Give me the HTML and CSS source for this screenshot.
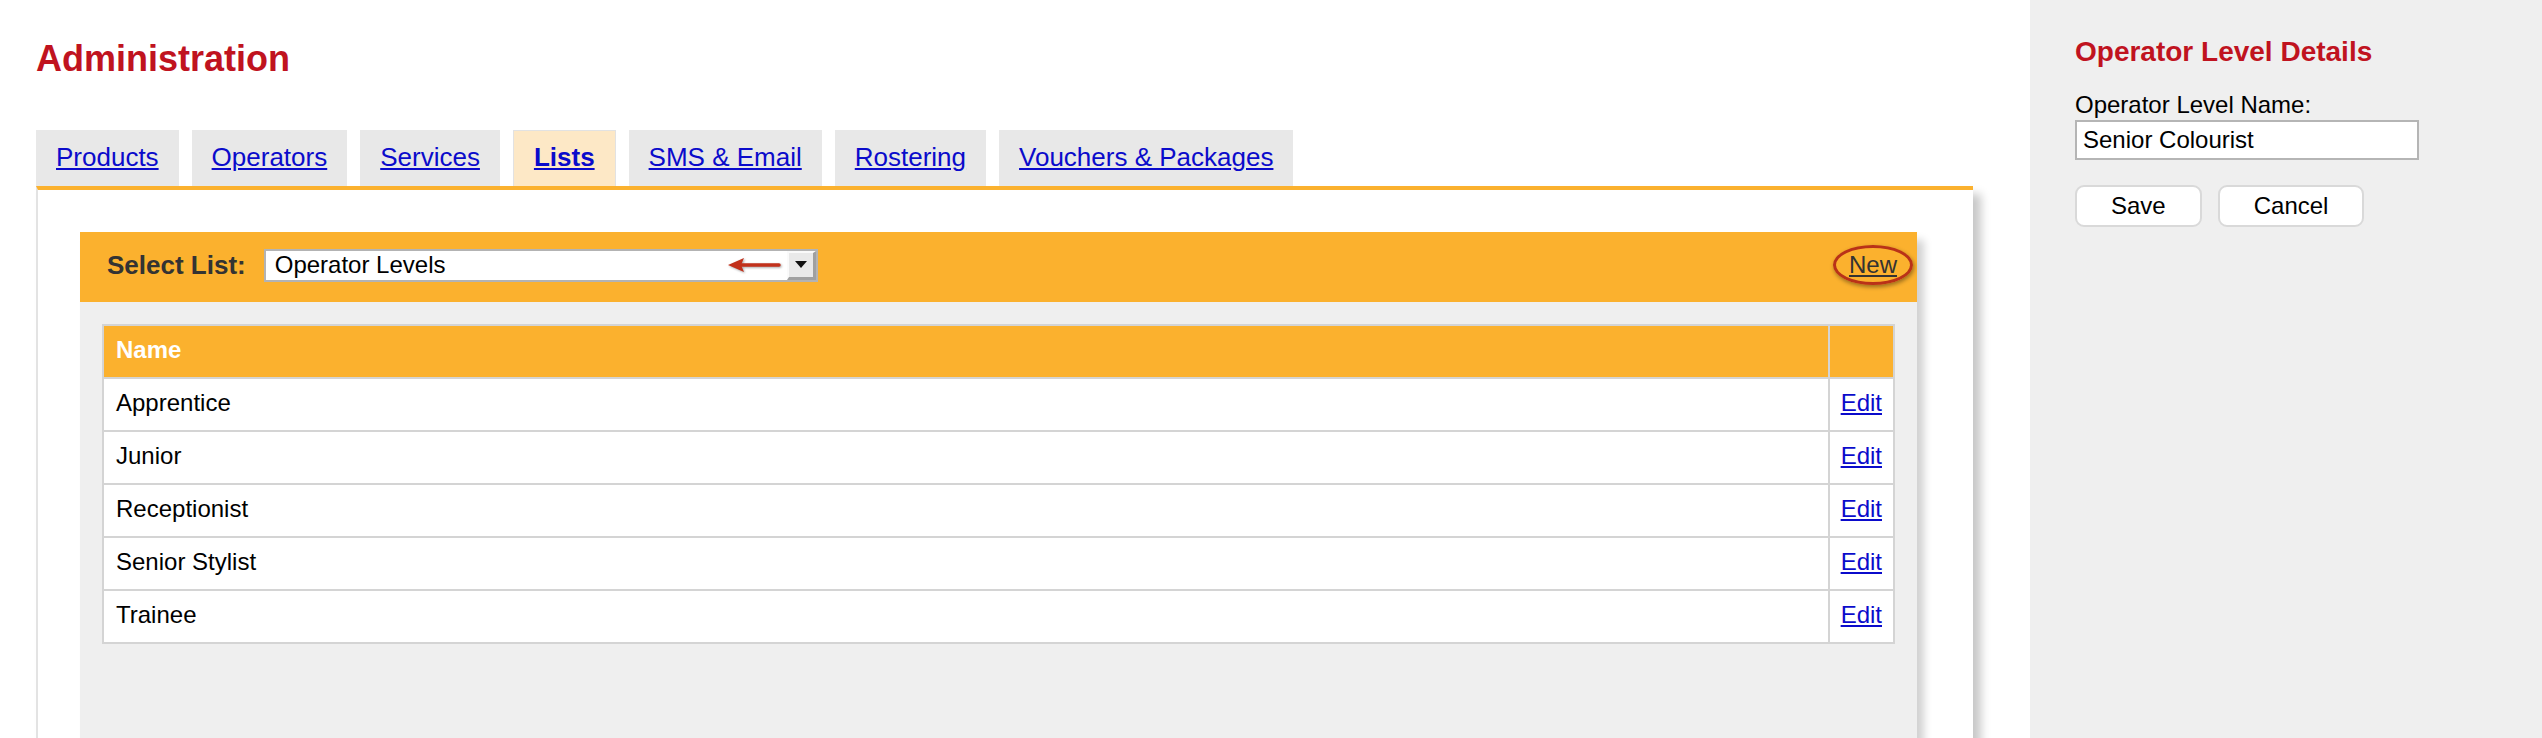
FILE: index.html
```html
<!DOCTYPE html>
<html lang="en">
<head>
  <meta charset="UTF-8">
  <title>Administration - Lists</title>
  <link rel="stylesheet" href="styles.css">
</head>
<body>
  <div class="page">
    <div class="main">
      <h1 class="page-title">Administration</h1>

      <!-- admin section tabs -->
      <ul class="tabs">
        <li class="tab"><a href="#">Products</a></li>
        <li class="tab"><a href="#">Operators</a></li>
        <li class="tab"><a href="#">Services</a></li>
        <li class="tab active"><a href="#">Lists</a></li>
        <li class="tab"><a href="#">SMS &amp; Email</a></li>
        <li class="tab"><a href="#">Rostering</a></li>
        <li class="tab"><a href="#">Vouchers &amp; Packages</a></li>
      </ul>

      <div class="panel">
        <div class="list-box">
          <div class="list-bar">
            <span class="list-label">Select List:</span>
            <div class="select-box">
              <span class="select-value">Operator Levels</span>
              <!-- red arrow pointing at the chosen list -->
              <svg class="note-arrow" width="54" height="16" viewBox="0 0 54 16">
                <line x1="13" y1="8" x2="52" y2="8" stroke="#c2311b" stroke-width="3.5" stroke-linecap="round"/>
                <polygon points="1,8 17,1 14,8 17,15" fill="#c2311b"/>
              </svg>
              <span class="select-button"><span class="select-caret"></span></span>
            </div>
            <span class="new-ring"><a href="#" class="new-link">New</a></span>
          </div>

          <div class="list-body">
            <table class="list-table">
              <thead>
                <tr><th>Name</th><th class="col-edit"></th></tr>
              </thead>
              <tbody>
                <tr><td>Apprentice</td><td class="col-edit"><a href="#">Edit</a></td></tr>
                <tr><td>Junior</td><td class="col-edit"><a href="#">Edit</a></td></tr>
                <tr><td>Receptionist</td><td class="col-edit"><a href="#">Edit</a></td></tr>
                <tr><td>Senior Stylist</td><td class="col-edit"><a href="#">Edit</a></td></tr>
                <tr><td>Trainee</td><td class="col-edit"><a href="#">Edit</a></td></tr>
              </tbody>
            </table>
          </div>
        </div>
      </div>
    </div>

    <!-- edit form for the selected item -->
    <div class="sidebar">
      <h2 class="side-title">Operator Level Details</h2>
      <label class="field-label" for="levelName">Operator Level Name:</label>
      <input type="text" id="levelName" class="field-input" value="Senior Colourist">
      <div class="form-buttons">
        <button class="btn">Save</button>
        <button class="btn">Cancel</button>
      </div>
    </div>
  </div>
</body>
</html>
```

FILE: styles.css
```css
/* page base */
body {
  margin: 0;
  font-family: "Liberation Sans", Arial, Helvetica, sans-serif;
  font-size: 24px;
  color: #000;
  background: #fff;
}
a {
  color: #0b0bcb;
}
.page {
  display: flex;
  min-height: 100vh;
}
.main {
  flex: 1;
  padding: 0 57px 0 36px;
}

/* title */
.page-title {
  margin: 38px 0 51px;
  font-size: 36px;
  line-height: 41px;
  font-weight: bold;
  color: #c0131f;
}

/* tabs */
.tabs {
  display: flex;
  gap: 13px;
  margin: 0;
  padding: 0;
  list-style: none;
}
.tab {
  background: #e8e8e8;
  padding: 12px 20px 14px;
  font-size: 26px;
  line-height: 30px;
}
.tab.active {
  background: #fde8c6;
  border: 1px solid #e2e2e2;
  border-bottom: none;
  padding-top: 11px;
  font-weight: bold;
}

/* white panel under the tabs */
.panel {
  background: #fff;
  border-top: 4px solid #fbb12e;
  border-left: 2px solid #e3e3e3;
  box-shadow: 8px 8px 9px rgba(0, 0, 0, 0.22);
  padding: 42px 56px 0 42px;
}
.list-box {
  background: #efefef;
  box-shadow: 7px 8px 8px rgba(0, 0, 0, 0.18);
  min-height: 640px;
}

/* orange bar with list selector */
.list-bar {
  display: flex;
  align-items: center;
  height: 70px;
  padding: 0 4px 4px 27px;
  box-sizing: border-box;
  background: #fbb12e;
}
.list-label {
  font-size: 26px;
  font-weight: bold;
  color: #333;
  margin-right: 18px;
}
.select-box {
  display: flex;
  align-items: stretch;
  width: 550px;
  height: 29px;
  border: 2px solid #b3b3b3;
  background: #fff;
}
.select-value {
  flex: 1;
  padding-left: 9px;
  line-height: 28px;
}
.note-arrow {
  align-self: center;
  margin-right: 6px;
  filter: drop-shadow(1px 1px 1px rgba(0, 0, 0, 0.35));
}
.select-button {
  display: flex;
  align-items: center;
  justify-content: center;
  box-sizing: border-box;
  width: 29px;
  background: #e9e9e9;
  border-top: 2px solid #fafafa;
  border-left: 2px solid #fafafa;
  border-right: 3px solid #a0a0a0;
  border-bottom: 3px solid #a0a0a0;
}
.select-caret {
  width: 0;
  height: 0;
  border-left: 6px solid transparent;
  border-right: 6px solid transparent;
  border-top: 7px solid #111;
}

/* "New" link, circled in red */
.new-ring {
  margin-left: auto;
  padding: 3px 13px;
  border: 3px solid #b93218;
  border-radius: 50%;
  box-shadow: 1px 2px 4px rgba(0, 0, 0, 0.4);
  line-height: 28px;
}
.new-link {
  color: #333;
}

/* list table */
.list-body {
  padding: 22px;
}
.list-table {
  width: 100%;
  border-collapse: separate;
  border-spacing: 2px;
  background: #d4d4d4;
}
.list-table th,
.list-table td {
  padding: 10px 12px 14px;
  line-height: 27px;
  text-align: left;
  background: #fff;
}
.list-table th {
  background: #fbb12e;
  color: #fff;
  font-weight: bold;
}
.list-table .col-edit {
  width: 1%;
  white-space: nowrap;
  padding-left: 11px;
  padding-right: 11px;
}

/* right side form */
.sidebar {
  width: 512px;
  background: #efefef;
  padding: 36px 0 0 45px;
  box-sizing: border-box;
}
.side-title {
  margin: 0 0 23px;
  font-size: 28px;
  line-height: 32px;
  color: #c0131f;
}
.field-label {
  display: block;
  line-height: 28px;
  margin-bottom: 1px;
}
.field-input {
  display: block;
  box-sizing: border-box;
  width: 344px;
  height: 40px;
  padding: 0 6px;
  border: 2px solid #b5b5b5;
  font-family: inherit;
  font-size: 24px;
  color: #000;
  background: #fff;
}
.form-buttons {
  display: flex;
  gap: 16px;
  margin-top: 25px;
}
.btn {
  height: 42px;
  padding: 0 34px;
  background: #fff;
  border: 2px solid #d9d9d9;
  border-radius: 9px;
  font-family: inherit;
  font-size: 24px;
  color: #000;
}
```
